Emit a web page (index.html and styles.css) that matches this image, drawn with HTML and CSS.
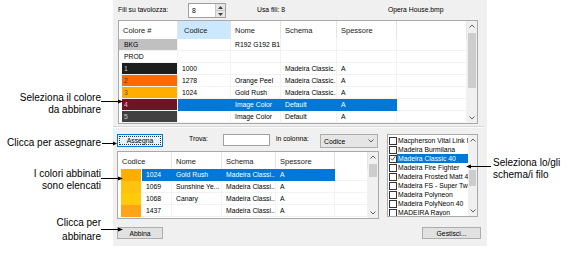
FILE: index.html
```html
<!DOCTYPE html>
<html lang="it">
<head>
  <meta charset="UTF-8">
  <meta name="viewport" content="width=device-width, initial-scale=1.0">
  <title>Abbina colori</title>
  <link rel="stylesheet" href="styles.css">
</head>
<body>
  <div class="page">
    <div class="notes-left">
      <div class="note note-1">Seleziona il colore<br>da abbinare</div>
      <div class="note note-2">Clicca per assegnare</div>
      <div class="note note-3">I colori abbinati<br>sono elencati</div>
      <div class="note note-4">Clicca per<br>abbinare</div>
    </div>

    <div class="dialog">
      <div class="topbar">
        <span class="lbl-fili">Fili su tavolozza:</span>
        <div class="spin">
          <span class="spin-val">8</span>
          <div class="spin-btns">
            <span><svg width="5" height="3" viewBox="0 0 5 3"><path d="M0 3 L2.5 0 L5 3 Z" fill="#404040"/></svg></span>
            <span><svg width="5" height="3" viewBox="0 0 5 3"><path d="M0 0 L2.5 3 L5 0 Z" fill="#404040"/></svg></span>
          </div>
        </div>
        <span class="usa">Usa fili: 8</span>
        <span class="file">Opera House.bmp</span>
      </div>

      <div class="list top-list">
        <div class="list-body">
          <div class="row-top head">
            <div class="hcell">Colore #</div>
            <div class="hcell sorted">Codice</div>
            <div class="hcell">Nome</div>
            <div class="hcell">Schema</div>
            <div class="hcell">Spessore</div>
            <div class="hcell"></div>
          </div>
          <div class="row-top">
            <div class="cell swatch full sw-bkg">BKG</div>
            <div class="cell"></div>
            <div class="cell">R192 G192 B192</div>
            <div class="cell"></div>
            <div class="cell"></div>
            <div class="cell"></div>
          </div>
          <div class="row-top">
            <div class="cell swatch">PROD</div>
            <div class="cell"></div>
            <div class="cell"></div>
            <div class="cell"></div>
            <div class="cell"></div>
            <div class="cell"></div>
          </div>
          <div class="row-top">
            <div class="cell swatch sw-1">1</div>
            <div class="cell">1000</div>
            <div class="cell"></div>
            <div class="cell">Madeira Classic...</div>
            <div class="cell">A</div>
            <div class="cell"></div>
          </div>
          <div class="row-top">
            <div class="cell swatch sw-2">2</div>
            <div class="cell">1278</div>
            <div class="cell">Orange Peel</div>
            <div class="cell">Madeira Classic...</div>
            <div class="cell">A</div>
            <div class="cell"></div>
          </div>
          <div class="row-top">
            <div class="cell swatch sw-3">3</div>
            <div class="cell">1024</div>
            <div class="cell">Gold Rush</div>
            <div class="cell">Madeira Classic...</div>
            <div class="cell">A</div>
            <div class="cell"></div>
          </div>
          <div class="row-top selected">
            <div class="cell swatch sw-4">4</div>
            <div class="cell sel"></div>
            <div class="cell sel">Image Color</div>
            <div class="cell sel">Default</div>
            <div class="cell sel">A</div>
            <div class="cell"></div>
          </div>
          <div class="row-top">
            <div class="cell swatch sw-5">5</div>
            <div class="cell"></div>
            <div class="cell">Image Color</div>
            <div class="cell">Default</div>
            <div class="cell">A</div>
            <div class="cell"></div>
          </div>
        </div>
        <div class="vscroll vs-top">
          <span class="arrow"><svg width="6" height="4" viewBox="0 0 6 4"><path d="M0.5 3.5 L3 1 L5.5 3.5" fill="none" stroke="#606060" stroke-width="1"/></svg></span>
          <span class="thumb"></span>
          <span class="track"></span>
          <span class="arrow"><svg width="6" height="4" viewBox="0 0 6 4"><path d="M0.5 0.5 L3 3 L5.5 0.5" fill="none" stroke="#606060" stroke-width="1"/></svg></span>
        </div>
      </div>

      <div class="separator"></div>

      <div class="lower">
        <div class="lower-left">
          <div class="midrow">
            <button class="btn focused">Assegna</button>
            <span class="lbl-trova">Trova:</span>
            <span class="input"></span>
            <span class="lbl-col">in colonna:</span>
            <div class="combo">
              <span>Codice</span>
              <svg width="6" height="4" viewBox="0 0 6 4"><path d="M0.5 0.5 L3 3 L5.5 0.5" fill="none" stroke="#606060" stroke-width="1"/></svg>
            </div>
          </div>

          <div class="list bottom-list">
            <div class="list-body">
              <div class="row-bot head">
                <div class="hcell span2">Codice</div>
                <div class="hcell">Nome</div>
                <div class="hcell">Schema</div>
                <div class="hcell">Spessore</div>
                <div class="hcell"></div>
              </div>
              <div class="row-bot">
                <div class="cell"><span class="chip chip-1024"></span></div>
                <div class="cell sel">1024</div>
                <div class="cell sel">Gold Rush</div>
                <div class="cell sel">Madeira Classi...</div>
                <div class="cell sel">A</div>
                <div class="cell"></div>
              </div>
              <div class="row-bot">
                <div class="cell"><span class="chip chip-1069"></span></div>
                <div class="cell">1069</div>
                <div class="cell">Sunshine Ye...</div>
                <div class="cell">Madeira Classi...</div>
                <div class="cell">A</div>
                <div class="cell"></div>
              </div>
              <div class="row-bot">
                <div class="cell"><span class="chip chip-1068"></span></div>
                <div class="cell">1068</div>
                <div class="cell">Canary</div>
                <div class="cell">Madeira Classi...</div>
                <div class="cell">A</div>
                <div class="cell"></div>
              </div>
              <div class="row-bot">
                <div class="cell"><span class="chip chip-1437"></span></div>
                <div class="cell">1437</div>
                <div class="cell"></div>
                <div class="cell">Madeira Classi...</div>
                <div class="cell">A</div>
                <div class="cell"></div>
              </div>
            </div>
            <div class="vscroll vs-bot">
              <span class="arrow"><svg width="6" height="4" viewBox="0 0 6 4"><path d="M0.5 3.5 L3 1 L5.5 3.5" fill="none" stroke="#606060" stroke-width="1"/></svg></span>
              <span class="thumb"></span>
              <span class="track"></span>
              <span class="arrow"><svg width="6" height="4" viewBox="0 0 6 4"><path d="M0.5 0.5 L3 3 L5.5 0.5" fill="none" stroke="#606060" stroke-width="1"/></svg></span>
            </div>
          </div>
        </div>

        <div class="list checklist">
          <div class="list-body">
            <div class="item"><span class="box"></span><span class="txt">Macpherson Vital Link Rayon</span></div>
            <div class="item"><span class="box"></span><span class="txt">Madeira Burmilana</span></div>
            <div class="item"><span class="box checked"><svg width="7" height="7" viewBox="0 0 7 7"><path d="M1 3.5 L2.8 5.5 L6 1.2" fill="none" stroke="#333" stroke-width="1"/></svg></span><span class="txt sel">Madeira Classic 40</span></div>
            <div class="item"><span class="box"></span><span class="txt">Madeira Fire Fighter</span></div>
            <div class="item"><span class="box"></span><span class="txt">Madeira Frosted Matt 40</span></div>
            <div class="item"><span class="box"></span><span class="txt">Madeira FS - Super Twist</span></div>
            <div class="item"><span class="box"></span><span class="txt">Madeira Polyneon</span></div>
            <div class="item"><span class="box"></span><span class="txt">Madeira PolyNeon 40</span></div>
            <div class="item"><span class="box"></span><span class="txt">MADEIRA Rayon</span></div>
            <div class="item"><span class="box"></span><span class="txt">Madeira Rayon 40</span></div>
          </div>
          <div class="vscroll vs-check">
            <span class="arrow"><svg width="6" height="4" viewBox="0 0 6 4"><path d="M0.5 3.5 L3 1 L5.5 3.5" fill="none" stroke="#606060" stroke-width="1"/></svg></span>
            <span class="thumb"></span>
            <span class="track"></span>
            <span class="arrow"><svg width="6" height="4" viewBox="0 0 6 4"><path d="M0.5 0.5 L3 3 L5.5 0.5" fill="none" stroke="#606060" stroke-width="1"/></svg></span>
          </div>
        </div>
      </div>

      <div class="buttons">
        <button class="btn">Abbina</button>
        <button class="btn btn-wide">Gestisci...</button>
      </div>
    </div>

    <div class="notes-right">
      <div class="note">Seleziona lo/gli<br>schema/i filo</div>
    </div>
  </div>

  <svg class="leaders" width="570" height="262" viewBox="0 0 570 262">
    <g stroke="#000" stroke-width="1">
      <line x1="101" y1="101.5" x2="119" y2="101.5"/>
      <line x1="102" y1="143.5" x2="114" y2="143.5"/>
      <line x1="101" y1="178.5" x2="119" y2="178.5"/>
      <line x1="101" y1="229.5" x2="119" y2="229.5"/>
      <line x1="470" y1="166.5" x2="491" y2="166.5"/>
    </g>
    <g fill="#000">
      <path d="M123 101.5 L118 99.5 L118 103.5 Z"/>
      <path d="M117 143.5 L113 141.5 L113 145.5 Z"/>
      <path d="M123 178.5 L118 176.5 L118 180.5 Z"/>
      <path d="M123 229.5 L118 227.5 L118 231.5 Z"/>
      <path d="M466 166.5 L471 164.5 L471 168.5 Z"/>
    </g>
  </svg>
</body>
</html>
```

FILE: styles.css
```css
* {
  box-sizing: border-box;
}
body {
  margin: 0;
  width: 570px;
  height: 262px;
  background: #fff;
  font-family: "Liberation Sans", Arial, sans-serif;
  position: relative;
  overflow: hidden;
}
.page {
  display: flex;
  align-items: flex-start;
}

/* callouts */
.notes-left {
  width: 113px;
  padding-right: 12px;
  text-align: right;
  font-size: 10px;
  line-height: 12px;
  color: #000;
}
.note-1 {
  margin-top: 92px;
}
.note-2 {
  margin-top: 21px;
}
.note-3 {
  margin-top: 19px;
}
.note-4 {
  margin-top: 24px;
  line-height: 14px;
}
.notes-right {
  padding-left: 6px;
  padding-top: 157px;
  font-size: 10px;
  line-height: 12px;
  color: #000;
}
.leaders {
  position: absolute;
  left: 0;
  top: 0;
  pointer-events: none;
}

/* dialog */
.dialog {
  width: 374px;
  height: 246px;
  background: #f0f0f0;
  padding: 0 6px 0 4px;
  font-size: 6.8px;
  color: #000;
  display: flex;
  flex-direction: column;
}
.topbar {
  height: 20px;
  display: flex;
  align-items: center;
  padding-left: 1px;
}
.lbl-fili {
  width: 70px;
  margin-top: -2px;
}
.spin {
  width: 38px;
  height: 15px;
  margin-top: 1px;
  background: #fff;
  border: 1px solid #a0a0a0;
  display: flex;
}
.spin-val {
  flex: 1;
  padding-left: 3px;
  line-height: 13px;
}
.spin-btns {
  width: 10px;
  display: flex;
  flex-direction: column;
  border-left: 1px solid #c8c8c8;
}
.spin-btns span {
  flex: 1;
  background: #e6e6e6;
  display: flex;
  align-items: center;
  justify-content: center;
}
.spin-btns span + span {
  border-top: 1px solid #c8c8c8;
}
.usa {
  width: 131px;
  margin-left: 31px;
  margin-top: -2px;
}
.file {
  margin-top: -2px;
}

/* list views */
.list {
  background: #fff;
  border: 1px solid #a9a9a9;
  display: flex;
  overflow: hidden;
}
.list-body {
  flex: 1;
  overflow: hidden;
}
.top-list {
  margin-left: 1px;
  width: 360px;
  height: 104px;
}
.row-top {
  display: grid;
  grid-template-columns: 59px 53px 50px 56px 60px 1fr;
  height: 12px;
}
.row-bot {
  display: grid;
  grid-template-columns: 24px 30px 50px 54px 59px 1fr;
  height: 12px;
}
.head {
  height: 18px;
}
.bottom-list .head {
  height: 17px;
}
.hcell {
  font-size: 7.5px;
  color: #1a1a1a;
  padding: 5px 0 0 4px;
  border-right: 1px solid #e5e5e5;
  white-space: nowrap;
  overflow: hidden;
}
.hcell.sorted {
  background: #cce8ff;
  padding-left: 6px;
}
.hcell.span2 {
  grid-column: span 2;
}
.cell {
  padding-left: 4px;
  line-height: 11px;
  border-right: 1px solid #f2f2f2;
  border-bottom: 1px solid #f2f2f2;
  white-space: nowrap;
  overflow: hidden;
}
.cell.sel {
  background: #0078d7;
  color: #fff;
  border-color: #0078d7;
}
.swatch {
  margin-left: 3px;
  padding-left: 2px;
}
.swatch.full {
  margin-left: 0;
  padding-left: 5px;
}
.sw-bkg {
  background: #c0c0c0;
}
.sw-1 {
  background: #1c1e1e;
  color: #c8c8c8;
}
.sw-2 {
  background: #ff6a00;
  color: #7a3000;
}
.sw-3 {
  background: #ffae00;
  color: #6a4a00;
}
.sw-4 {
  background: #6e1427;
  color: #e0c0c8;
}
.sw-5 {
  background: #414141;
  color: #d0d0d0;
}

/* scrollbars */
.vscroll {
  width: 10px;
  background: #f0f0f0;
  display: flex;
  flex-direction: column;
}
.arrow {
  height: 10px;
  display: flex;
  align-items: center;
  justify-content: center;
}
.thumb {
  background: #cdcdcd;
  margin: 2px 1px 0;
}
.track {
  flex: 1;
}
.vs-top .thumb {
  height: 55px;
}
.vs-bot .thumb {
  height: 13px;
}
.vs-check {
  width: 9px;
}
.vs-check .thumb {
  height: 16px;
  margin-top: 25px;
}

.separator {
  margin: 2px -3px 0 -4px;
  height: 2px;
  border-top: 1px solid #d8d8d8;
  border-bottom: 1px solid #fbfbfb;
}

/* lower section */
.lower {
  display: flex;
  gap: 8px;
  margin-top: 6px;
}
.lower-left {
  width: 262px;
}
.midrow {
  height: 14px;
  display: flex;
  align-items: flex-start;
}
.btn {
  width: 46px;
  height: 13px;
  padding: 0;
  font-family: "Liberation Sans", Arial, sans-serif;
  font-size: 6.8px;
  color: #000;
  background: #e1e1e1;
  border: 1px solid #adadad;
}
.btn.focused {
  background: #e5f1fb;
  border-color: #0078d7;
  outline: 1px dotted #333;
  outline-offset: -3px;
}
.lbl-trova {
  width: 34px;
  margin-left: 26px;
  margin-top: 1px;
}
.input {
  width: 47px;
  height: 12px;
  background: #fff;
  border: 1px solid #a0a0a0;
}
.lbl-col {
  width: 44px;
  margin-left: 6px;
  margin-top: 1px;
}
.combo {
  width: 58px;
  height: 14px;
  background: #e5e5e5;
  border: 1px solid #adadad;
  display: flex;
  align-items: center;
  justify-content: space-between;
  padding: 0 3px 0 3px;
}
.bottom-list {
  margin-top: 3px;
  width: 262px;
  height: 68px;
}
.chip {
  display: block;
  margin-left: 3px;
  width: 20px;
  height: 12px;
}
.row-bot .cell:first-child {
  padding-left: 0;
  border: none;
}
.chip-1024 {
  background: #ffae00;
}
.chip-1069 {
  background: #ffc20e;
}
.chip-1068 {
  background: #ffca0a;
}
.chip-1437 {
  background: #ffa31a;
}

/* thread charts checklist */
.checklist {
  width: 91px;
  height: 83px;
}
.checklist .list-body {
  padding-top: 1px;
}
.item {
  height: 9px;
  display: flex;
  align-items: center;
  white-space: nowrap;
}
.box {
  width: 8px;
  height: 8px;
  margin-left: 1px;
  background: #fff;
  border: 1px solid #333;
  flex: none;
  display: flex;
  align-items: center;
  justify-content: center;
}
.txt {
  flex: 1;
  padding-left: 1px;
  line-height: 9px;
  overflow: hidden;
}
.txt.sel {
  background: #0078d7;
  color: #fff;
}

.buttons {
  display: flex;
  justify-content: space-between;
  margin-top: 8px;
}
.buttons .btn {
  height: 12px;
}
.btn-wide {
  width: 59px;
}
```
